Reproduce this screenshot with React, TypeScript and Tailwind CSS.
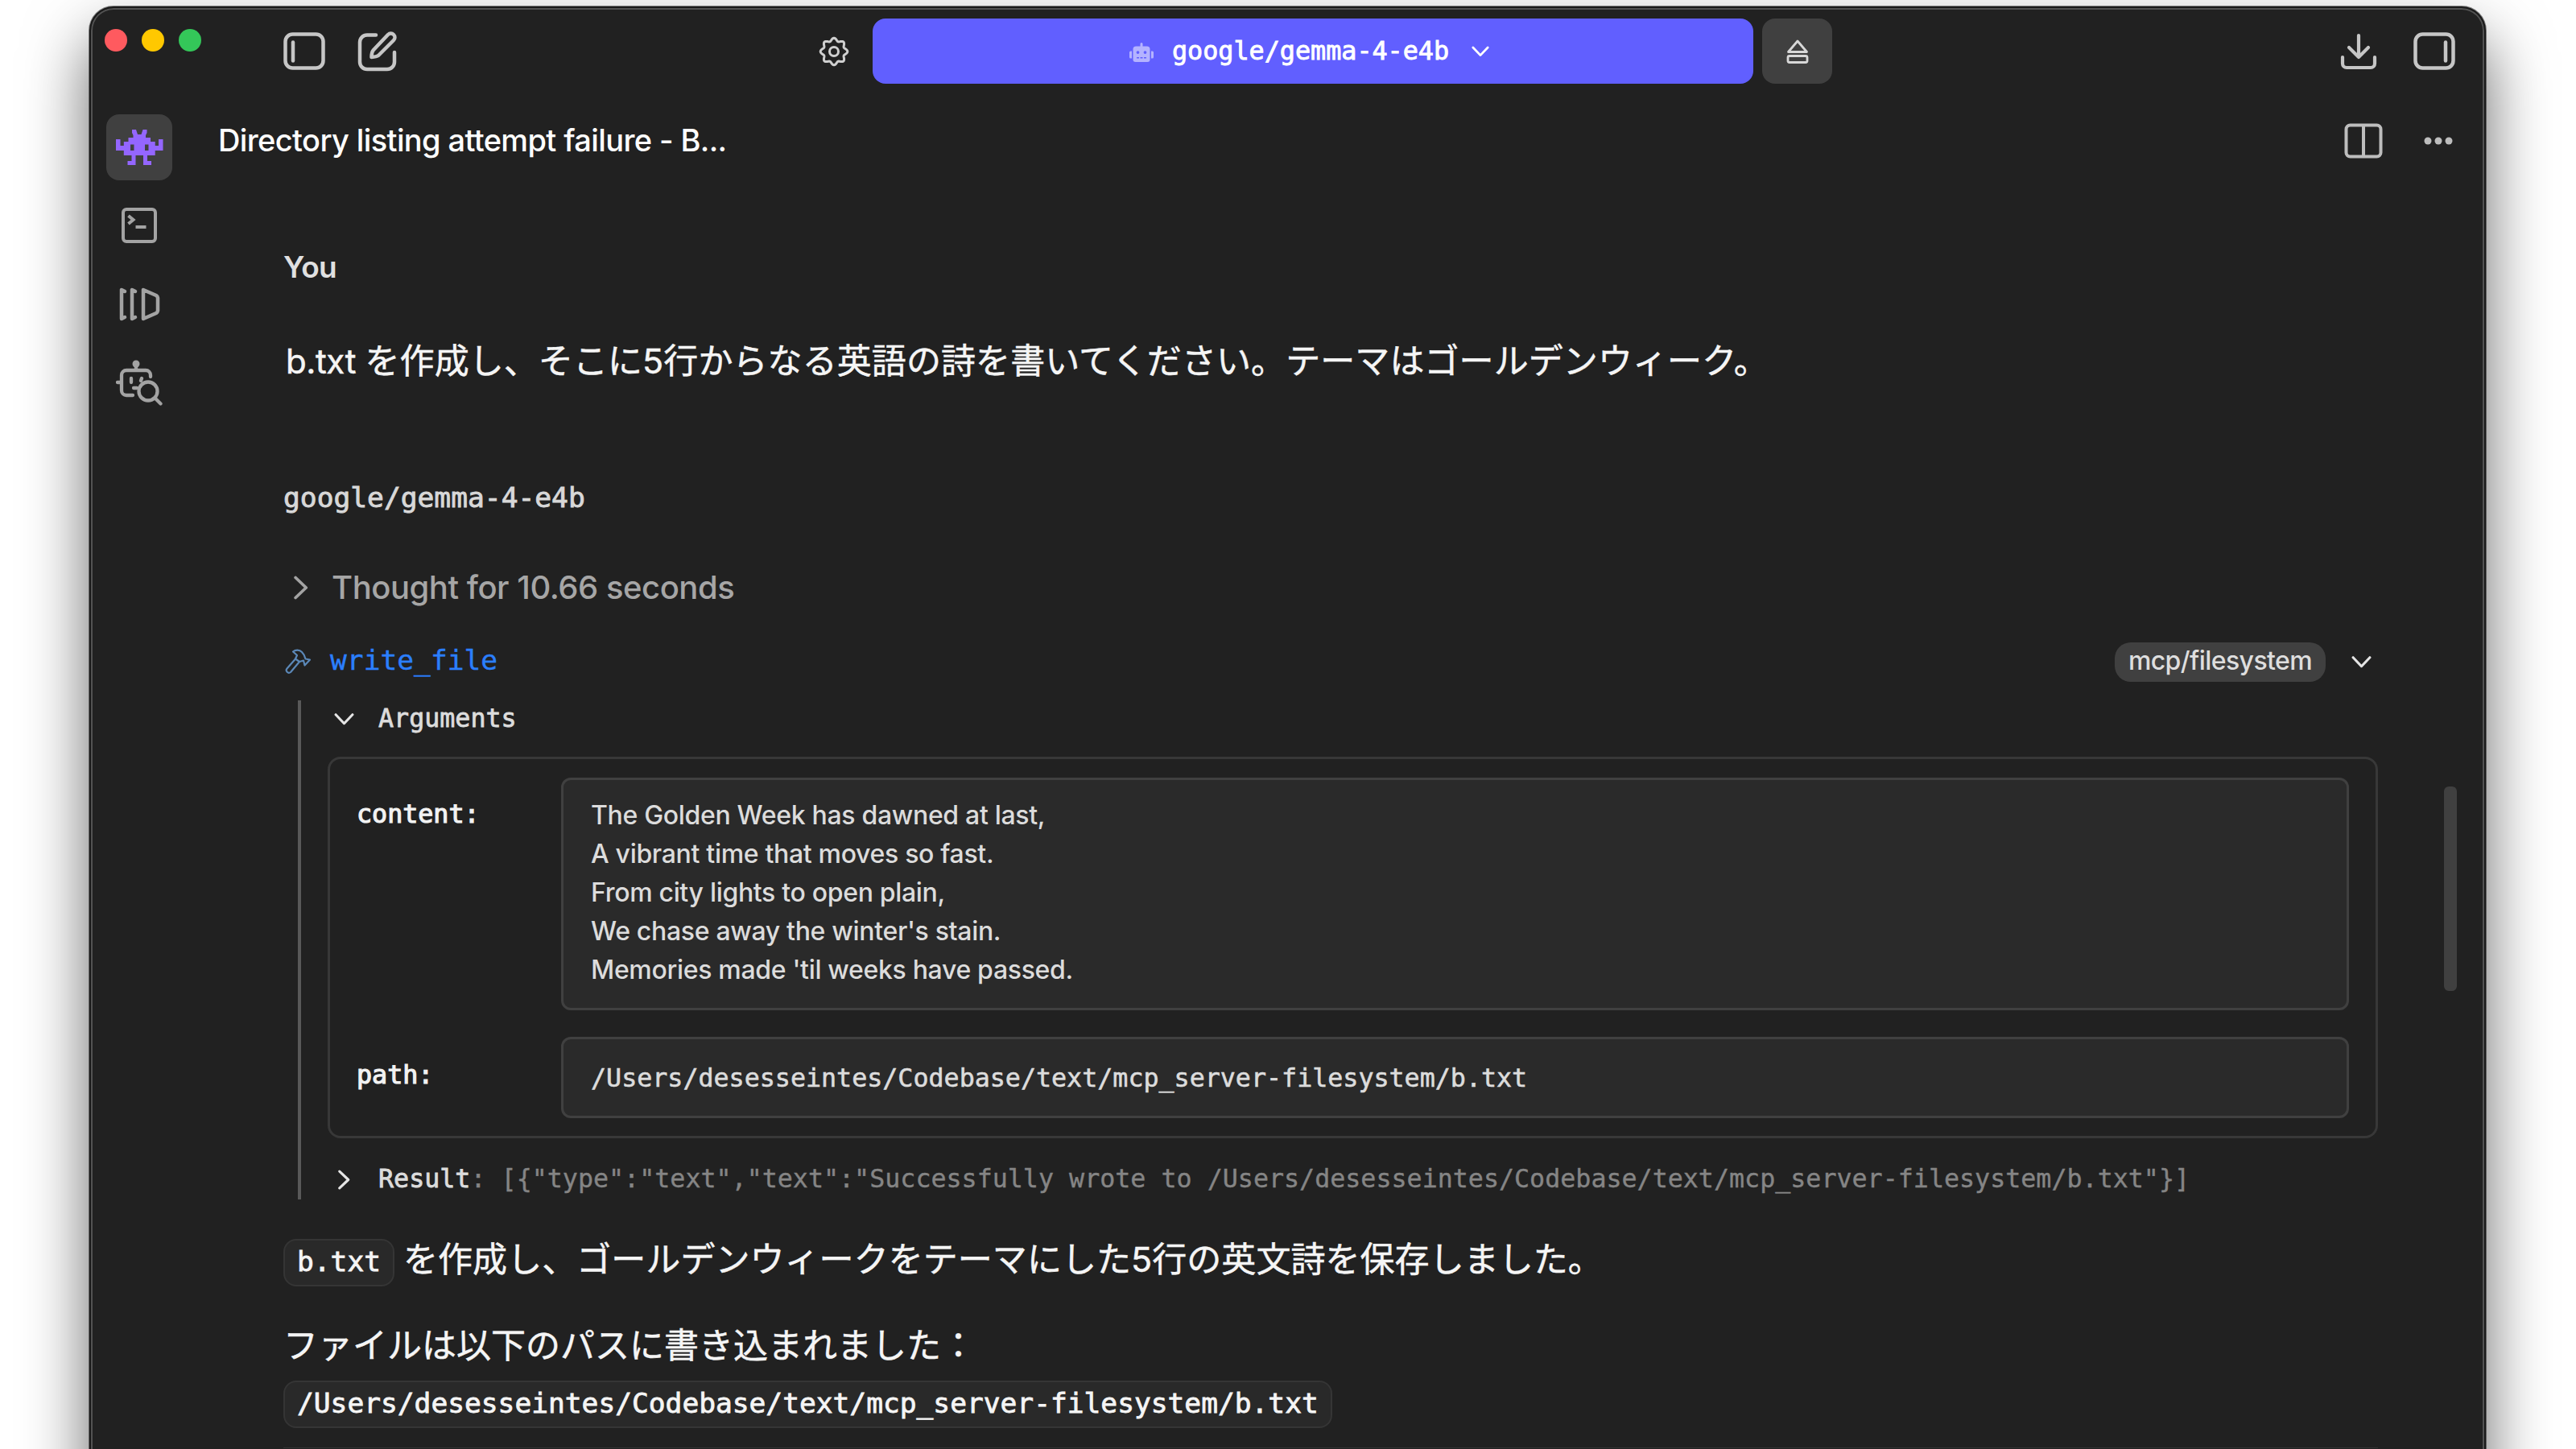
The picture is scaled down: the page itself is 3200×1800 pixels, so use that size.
import type { ReactNode } from "react";
import { FaRobot } from "react-icons/fa";

const FILE_PATH =
  "/Users/desesseintes/Codebase/text/mcp_server-filesystem/b.txt";

const POEM = [
  "The Golden Week has dawned at last,",
  "A vibrant time that moves so fast.",
  "From city lights to open plain,",
  "We chase away the winter's stain.",
  "Memories made 'til weeks have passed.",
];

function InvaderIcon() {
  return (
    <svg width="59" height="44" viewBox="0 0 59 44" fill="#9466ff">
      <path
        fillRule="evenodd"
        d="M20 0H25L27 6H31.500L33.500 0H38.500V4L37 7V10H43V15H48.700V20H53V12H58.500V26H48.700V32H39V39H44V44H34V32H24.500V44H14.500V39H19.500V32H9.800V26H0V12H5.500V20H9.800V15H15.500V10H21.500V7L20 4ZM18 18.500V26H22.500V18.500ZM36 18.500V26H40.500V18.500Z"
      />
    </svg>
  );
}

function TerminalIcon() {
  return (
    <svg width="46" height="46" viewBox="0 0 46 46" fill="none" stroke="#a3a3a3" strokeWidth="4">
      <rect x="3" y="3" width="40" height="40" rx="4" />
      <path d="M9.500 11l6 5-6 5M18.500 25h13" />
    </svg>
  );
}

function LibraryIcon() {
  return (
    <svg
      width="54"
      height="44"
      viewBox="0 0 54 44"
      fill="none"
      stroke="#a3a3a3"
      strokeWidth="4.500"
      strokeLinejoin="round"
      strokeLinecap="round"
    >
      <path d="M9 6l-4-2v36l4-2M22 6l-4-2v36l4-2M32 4v36l16-7a4 4 0 0 0 2-3V14a4 4 0 0 0-2-3z" />
    </svg>
  );
}

function BotSearchIcon() {
  return (
    <svg
      width="58"
      height="60"
      viewBox="0 0 58 60"
      fill="none"
      stroke="#a3a3a3"
      strokeWidth="4.300"
      strokeLinecap="round"
    >
      <circle cx="25" cy="6" r="4.500" fill="#a3a3a3" stroke="none" />
      <path d="M25 8v6M43 22v-2a6 6 0 0 0-6-6H13a6 6 0 0 0-6 6v19a6 6 0 0 0 6 6h8M2 29h4M19 24v5M32 24l-1 3M22 36h4" />
      <circle cx="40" cy="40" r="11.500" />
      <path d="M48.500 48.500l7 7" />
    </svg>
  );
}

function PanelIcon({ side }: { side: "left" | "right" }) {
  const x = side === "left" ? 12 : 40;
  return (
    <svg
      width="52"
      height="48"
      viewBox="0 0 52 48"
      fill="none"
      stroke="#c6c6c6"
      strokeWidth="4.500"
      strokeLinecap="round"
    >
      <rect x="2.500" y="2.500" width="47" height="42" rx="9" />
      <path d={`M${x} 12.500v23`} />
    </svg>
  );
}

function ComposeIcon() {
  return (
    <svg
      width="50"
      height="52"
      viewBox="0 0 50 52"
      fill="none"
      stroke="#c6c6c6"
      strokeWidth="4.500"
      strokeLinecap="round"
      strokeLinejoin="round"
    >
      <path d="M23 5.500H12a9 9 0 0 0-9 9V39a9 9 0 0 0 9 9h25a9 9 0 0 0 9-9V27" />
      <path d="M38 5a4.800 4.800 0 0 1 7 7L26 31q-2 1.500-8.500 2 0-6 2.500-9z" />
    </svg>
  );
}

// scalloped ring with eight teeth
function GearIcon() {
  const points = Array.from({ length: 96 }, (_, i) => {
    const a = (i / 96) * Math.PI * 2;
    const r = 15 + 1.8 * Math.cos(a * 8);
    return `${(19 + r * Math.sin(a)).toFixed(2)},${(19 - r * Math.cos(a)).toFixed(2)}`;
  }).join(" ");
  return (
    <svg width="38" height="38" viewBox="0 0 38 38" fill="none" stroke="#cfcfcf" strokeWidth="3">
      <polygon points={points} strokeLinejoin="round" />
      <circle cx="19" cy="19" r="5.500" />
    </svg>
  );
}

function EjectIcon() {
  return (
    <svg
      width="28"
      height="32"
      viewBox="0 0 28 32"
      fill="none"
      stroke="#d8d8d8"
      strokeWidth="2.800"
      strokeLinejoin="round"
    >
      <path d="M14 3l11.500 13.500h-23z" />
      <rect x="2" y="21.500" width="24" height="8" rx="2" />
    </svg>
  );
}

function DownloadIcon() {
  return (
    <svg
      width="46"
      height="48"
      viewBox="0 0 46 48"
      fill="none"
      stroke="#c6c6c6"
      strokeWidth="4.200"
      strokeLinecap="round"
      strokeLinejoin="round"
    >
      <path d="M23 4v27M11 19l12 12 12-12M3 31v8a5 5 0 0 0 5 5h30a5 5 0 0 0 5-5v-8" />
    </svg>
  );
}

function SplitIcon() {
  return (
    <svg width="48" height="44" viewBox="0 0 48 44" fill="none" stroke="#bdbdbd" strokeWidth="4">
      <rect x="2.500" y="2.500" width="43" height="39" rx="5" />
      <path d="M24 3v38" />
    </svg>
  );
}

function HammerIcon() {
  return (
    <svg
      width="33"
      height="32"
      viewBox="0 0 33 32"
      fill="none"
      stroke="#5b88b8"
      strokeWidth="2.200"
      strokeLinejoin="round"
      strokeLinecap="round"
    >
      <path d="M13 12.500L2.500 24.500a3.200 3.200 0 0 0 4.500 4.500L18 16" />
      <path d="M13 12.500l2-4.500-5-4.500c3-2.500 8-2.500 11 0.500 2.500 2.500 4 5.500 4.500 8.500l5.500 1-6.500 7-1.500-6-5 1.500z" />
    </svg>
  );
}

function Chevron({ dir, color, size }: { dir: "down" | "right"; color: string; size: number }) {
  return (
    <svg
      width={size}
      height={size}
      viewBox="0 0 24 24"
      fill="none"
      stroke={color}
      strokeWidth="3"
      strokeLinecap="round"
      strokeLinejoin="round"
    >
      <path d={dir === "down" ? "M2 6.500l10 10.500 10-10.500" : "M6.500 2l10.500 10-10.500 10"} />
    </svg>
  );
}

function Toolbar() {
  return (
    <header className="flex h-[107px] items-center">
      <div className="mb-7 ml-[17px] flex gap-[18px]">
        <span className="h-7 w-7 rounded-full bg-[#ff5a5f]" />
        <span className="h-7 w-7 rounded-full bg-[#ffc800]" />
        <span className="h-7 w-7 rounded-full bg-[#34c759]" />
      </div>
      <div className="ml-[102px] flex items-center gap-10">
        <PanelIcon side="left" />
        <ComposeIcon />
      </div>
      <div className="ml-[523px] flex items-center">
        <GearIcon />
        <button
          type="button"
          className="ml-[29px] flex h-[81px] w-[1094px] items-center rounded-2xl bg-[#615fff] pl-[319px] text-white"
        >
          <FaRobot className="mt-0.5 h-[30px] w-[30px] text-[#b4b3ff]" />
          <span className="ml-[23px] text-[31.750px] [font-family:'DejaVu_Sans_Mono',monospace] [-webkit-text-stroke:0.9px_currentColor]">
            google/gemma-4-e4b
          </span>
          <span className="ml-[28px]">
            <Chevron dir="down" color="#ffffff" size={22} />
          </span>
        </button>
        <button
          type="button"
          className="ml-[11px] flex h-[81px] w-[87px] items-center justify-center rounded-2xl bg-[#404040]"
        >
          <EjectIcon />
        </button>
      </div>
      <div className="mr-[36px] ml-auto flex items-center gap-[45px]">
        <DownloadIcon />
        <PanelIcon side="right" />
      </div>
    </header>
  );
}

function RailItem({ active, children }: { active?: boolean; children: ReactNode }) {
  return (
    <button
      type="button"
      className={
        active
          ? "flex h-[82px] w-[82px] items-center justify-center rounded-2xl bg-[#404040]"
          : "flex h-[82px] w-[82px] items-center justify-center pb-0.5"
      }
    >
      {children}
    </button>
  );
}

function ToolCall() {
  return (
    <section className="mt-[37px]">
      <div className="flex h-[50px] items-center">
        <span className="ml-[2px]">
          <HammerIcon />
        </span>
        <span className="mb-[3px] ml-[23px] text-[34.600px] text-[#2b7fff] [font-family:'DejaVu_Sans_Mono',monospace] [-webkit-text-stroke:0.4px_currentColor]">
          write_file
        </span>
        <span className="ml-auto flex h-[49px] w-[262px] items-center justify-center rounded-[20px] bg-[#404040] pb-0.5 text-[32px] font-medium tracking-[-0.580px] text-[#dedede]">
          mcp/filesystem
        </span>
        <span className="mr-2 ml-8">
          <Chevron dir="down" color="#e5e5e5" size={25} />
        </span>
      </div>

      <div className="mt-[23px] ml-[18px] h-[620px] border-l-4 border-[#595959] pl-[33px] text-[31.680px] [font-family:'DejaVu_Sans_Mono',monospace]">
        <div className="flex h-[46px] items-center pl-2 text-[#dcdcdc]">
          <Chevron dir="down" color="#e5e5e5" size={25} />
          <span className="ml-[30px] [-webkit-text-stroke:0.8px_currentColor]">Arguments</span>
        </div>

        <div className="mt-6 flex h-[474px] flex-col gap-[33px] rounded-2xl border-[3px] border-[#383838] px-[33px] pt-[23px]">
          <div className="flex h-[289px]">
            <span className="w-[254px] leading-[90px] text-[#f2f2f2] [-webkit-text-stroke:1.200px_currentColor]">
              content:
            </span>
            <div className="flex-1 rounded-xl border-[3px] border-[#404040] bg-[#2a2a2a] px-[34px] py-5 text-[32px] leading-[48px] font-medium tracking-[-0.320px] text-[#dcdcdc] [font-family:Inter,sans-serif]">
              {POEM.map((line) => (
                <p key={line}>{line}</p>
              ))}
            </div>
          </div>
          <div className="flex h-[101px]">
            <span className="w-[254px] leading-[95px] text-[#f2f2f2] [-webkit-text-stroke:1.200px_currentColor]">
              path:
            </span>
            <div className="flex flex-1 items-center rounded-xl border-[3px] border-[#404040] bg-[#2a2a2a] px-[34px] pt-0.5 text-[#dcdcdc] [-webkit-text-stroke:0.6px_currentColor]">
              {FILE_PATH}
            </div>
          </div>
        </div>

        <div className="mt-[26px] flex h-[50px] items-center pl-2 whitespace-pre text-[#858585]">
          <Chevron dir="right" color="#e5e5e5" size={25} />
          <span className="ml-[30px] text-[#dcdcdc] [-webkit-text-stroke:0.8px_currentColor]">Result</span>
          <span className="[-webkit-text-stroke:0.4px_currentColor]">
            {`: [{"type":"text","text":"Successfully wrote to ${FILE_PATH}"}]`}
          </span>
        </div>
      </div>
    </section>
  );
}

function Code({ children }: { children: ReactNode }) {
  return (
    <code className="flex h-[59px] items-center rounded-2xl border-2 border-[#353535] bg-[#292929] px-[15px] pb-0.5 text-[34.550px] [font-family:'DejaVu_Sans_Mono',monospace] [-webkit-text-stroke:0.8px_currentColor]">
      {children}
    </code>
  );
}

function Conversation() {
  return (
    <div className="relative pt-[73px] pr-[132px] pl-[138px]">
      <h2 className="h-[60px] text-[37px] leading-[60px] font-semibold tracking-[-0.600px] text-[#e0e0e0]">
        You
      </h2>
      <p className="mt-[56px] h-[60px] pl-[3px] text-[43px] leading-[60px] tracking-[0.080px] whitespace-nowrap text-[#f5f5f5] [-webkit-text-stroke:0.5px_currentColor]">
        <span className="text-[42px] tracking-[-0.400px]">b.txt </span>
        を作成し、そこに5行からなる英語の詩を書いてください。テーマはゴールデンウィーク。
      </p>

      <h2 className="mt-[110px] h-[60px] text-[34.600px] leading-[60px] text-[#d8d8d8] [font-family:'DejaVu_Sans_Mono',monospace] [-webkit-text-stroke:0.9px_currentColor]">
        google/gemma-4-e4b
      </h2>

      <div className="mt-[52px] flex h-[60px] items-center pl-[7px]">
        <Chevron dir="right" color="#a3a3a3" size={30} />
        <span className="ml-[23px] text-[40px] font-medium tracking-[-0.470px] text-[#a6a6a6]">
          Thought for 10.66 seconds
        </span>
      </div>

      <ToolCall />

      <div className="mt-[49px] flex h-[59px] items-center text-[43px] leading-[59px] whitespace-nowrap text-[#f5f5f5]">
        <Code>b.txt</Code>
        <span className="mb-2 ml-[11px] tracking-[0.050px] [-webkit-text-stroke:0.5px_currentColor]">
          を作成し、ゴールデンウィークをテーマにした5行の英文詩を保存しました。
        </span>
      </div>
      <p className="mt-[44px] h-[60px] text-[43px] leading-[58px] text-[#f5f5f5] [-webkit-text-stroke:0.5px_currentColor]">
        ファイルは以下のパスに書き込まれました：
      </p>
      <div className="mt-[13px] flex text-[#f5f5f5]">
        <Code>{FILE_PATH}</Code>
      </div>
      <hr className="mt-6 border-t border-[#333333]" />

      <div className="absolute top-[748px] right-[34px] h-[254px] w-4 rounded-md bg-[#404040]" />
    </div>
  );
}

export default function App() {
  return (
    <main className="h-[1800px] w-[3200px] overflow-hidden bg-white pt-2 pl-[111px] [font-family:Inter,'Noto_Sans_CJK_JP',sans-serif]">
      <div className="h-[1900px] w-[2977px] rounded-[30px] border-2 border-[#1a1a1a] bg-[#212121] shadow-[inset_0_0_0_2px_#525252,0_0_0_1px_rgba(0,0,0,0.45),0_40px_80px_rgba(0,0,0,0.6)]">
        <Toolbar />
        <div className="flex">
          <nav className="flex w-[101px] flex-col items-end gap-4 pt-[25px]">
            <RailItem active>
              <InvaderIcon />
            </RailItem>
            <RailItem>
              <TerminalIcon />
            </RailItem>
            <RailItem>
              <LibraryIcon />
            </RailItem>
            <RailItem>
              <BotSearchIcon />
            </RailItem>
          </nav>
          <div className="min-w-0 flex-1">
            <div className="flex h-[112px] items-center pt-[3px] pr-[39px] pl-[57px]">
              <h1 className="text-[38px] font-medium tracking-[-0.620px] text-white">
                Directory listing attempt failure - B...
              </h1>
              <div className="ml-auto flex items-center gap-[51px]">
                <SplitIcon />
                <svg width="36" height="10" viewBox="0 0 36 10" fill="#bdbdbd">
                  <circle cx="5" cy="5" r="4.500" />
                  <circle cx="18" cy="5" r="4.500" />
                  <circle cx="31" cy="5" r="4.500" />
                </svg>
              </div>
            </div>
            <Conversation />
          </div>
        </div>
      </div>
    </main>
  );
}
